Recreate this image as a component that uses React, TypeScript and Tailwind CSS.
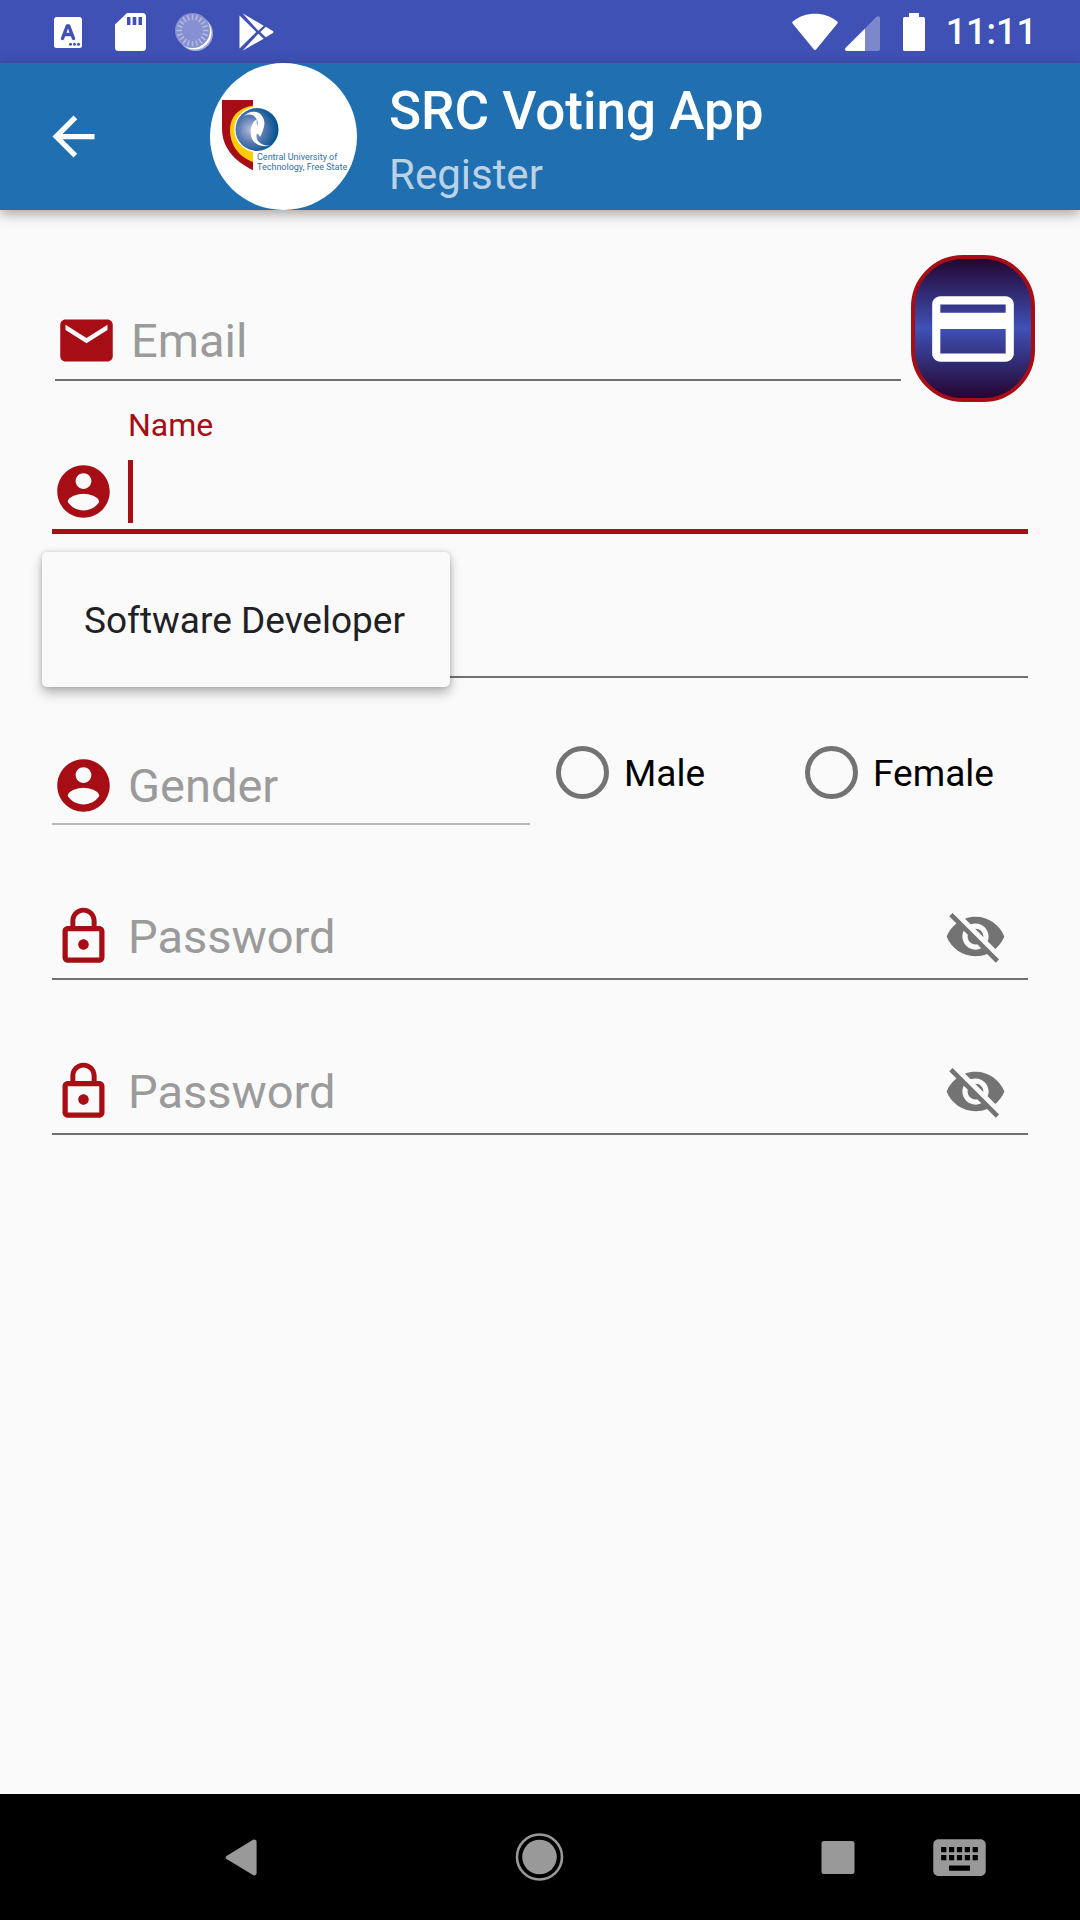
import { useState, type ReactNode } from "react";

const PATHS = {
  back: "M20 11H7.83l5.59-5.59L12 4l-8 8 8 8 1.41-1.41L7.83 13H20v-2z",
  mail: "M20 4H4c-1.1 0-1.99.9-1.99 2L2 18c0 1.1.9 2 2 2h16c1.1 0 2-.9 2-2V6c0-1.1-.9-2-2-2zm0 4l-8 5-8-5V6l8 5 8-5v2z",
  person:
    "M12 2C6.48 2 2 6.48 2 12s4.48 10 10 10 10-4.48 10-10S17.52 2 12 2zm0 3c1.66 0 3 1.34 3 3s-1.34 3-3 3-3-1.34-3-3 1.34-3 3-3zm0 14.2c-2.5 0-4.71-1.28-6-3.22.03-1.99 4-3.08 6-3.08 1.99 0 5.97 1.09 6 3.08-1.29 1.94-3.5 3.22-6 3.22z",
  lock: "M12 17c1.1 0 2-.9 2-2s-.9-2-2-2-2 .9-2 2 .9 2 2 2zm6-9h-1V6c0-2.76-2.24-5-5-5S7 3.24 7 6v2H6c-1.1 0-2 .9-2 2v10c0 1.1.9 2 2 2h12c1.1 0 2-.9 2-2V10c0-1.1-.9-2-2-2zM8.9 6c0-1.71 1.39-3.1 3.1-3.1s3.1 1.39 3.1 3.1v2H8.9V6zM18 20H6V10h12v10z",
  eyeOff:
    "M12 7c2.76 0 5 2.24 5 5 0 .65-.13 1.26-.36 1.83l2.92 2.92c1.51-1.26 2.7-2.89 3.43-4.75-1.73-4.39-6-7.5-11-7.5-1.4 0-2.74.25-3.98.7l2.16 2.16C10.74 7.13 11.35 7 12 7zM2 4.27l2.28 2.28.46.46C3.08 8.3 1.78 10.02 1 12c1.73 4.39 6 7.5 11 7.5 1.55 0 3.03-.3 4.38-.84l.42.42L19.73 22 21 20.73 3.27 3 2 4.27zM7.53 9.8l1.55 1.55c-.05.21-.08.43-.08.65 0 1.66 1.34 3 3 3 .22 0 .44-.03.65-.08l1.55 1.55c-.67.33-1.41.53-2.2.53-2.76 0-5-2.24-5-5 0-.79.2-1.53.53-2.2zm4.31-.78l3.15 3.15.02-.16c0-1.66-1.34-3-3-3l-.17.01z",
  card: "M20 4H4c-1.11 0-1.99.89-1.99 2L2 18c0 1.11.89 2 2 2h16c1.11 0 2-.89 2-2V6c0-1.11-.89-2-2-2zm0 14H4v-6h16v6zm0-10H4V6h16v2z",
  keyboard:
    "M20 5H4c-1.1 0-1.99.9-1.99 2L2 17c0 1.1.9 2 2 2h16c1.1 0 2-.9 2-2V7c0-1.1-.9-2-2-2zm-9 3h2v2h-2V8zm0 3h2v2h-2v-2zM8 8h2v2H8V8zm0 3h2v2H8v-2zm-1 2H5v-2h2v2zm0-3H5V8h2v2zm9 7H8v-2h8v2zm0-4h-2v-2h2v2zm0-3h-2V8h2v2zm3 3h-2v-2h2v2zm0-3h-2V8h2v2z",
};

function Icon({ name, className = "size-[63px]" }: { name: keyof typeof PATHS; className?: string }) {
  return (
    <svg viewBox="0 0 24 24" fill="currentColor" aria-hidden="true" className={`${className} shrink-0`}>
      <path d={PATHS[name]} />
    </svg>
  );
}

function StatusBar() {
  const ticks = Array.from({ length: 20 }, (_, i) => i * 18);
  return (
    <div className="flex h-[63px] items-center justify-between bg-[#3f51b5] pr-[43px] pl-9 text-white">
      <div className="flex">
        <div className="flex w-[63px] justify-center">
          <svg viewBox="0 0 28 38" className="h-[38px] w-[28px]" aria-hidden="true">
            <rect x="0" y="4" width="28" height="31" rx="2.5" fill="#fff" />
            <path d="M8.5 25.5 13.2 13h1.6l4.7 12.500M10.500 21.500h7" fill="none" stroke="#3f51b5" strokeWidth="3.4" strokeLinecap="round" strokeLinejoin="round" />
            <circle cx="16.500" cy="31.200" r="1.500" fill="#3f51b5" />
            <circle cx="20.500" cy="31.200" r="1.500" fill="#3f51b5" />
            <circle cx="24.500" cy="31.200" r="1.500" fill="#3f51b5" />
          </svg>
        </div>
        <div className="flex w-[63px] justify-center">
          <svg viewBox="0 0 31 38" className="h-[38px] w-[31px]" aria-hidden="true">
            <path d="M12 0h15.500A3.500 3.500 0 0 1 31 3.500v31a3.500 3.500 0 0 1-3.500 3.500h-24A3.500 3.500 0 0 1 0 34.500V11.500z" fill="#fff" />
            <path d="M12 4h3.400v8H12zM17.700 4h3.600v8h-3.600zM23.500 4h3.500v8h-3.500z" fill="#3f51b5" />
          </svg>
        </div>
        <div className="flex w-[63px] justify-center">
          <svg viewBox="0 0 38 38" className="size-[38px]" aria-hidden="true">
            <circle cx="20.500" cy="20.500" r="17.500" fill="#a3abdb" />
            <circle cx="19.500" cy="19.500" r="17" fill="#fff" />
            <circle cx="17.500" cy="17.500" r="17.500" fill="#8790d0" />
            {ticks.map((a) => (
              <path key={a} d="M17.500 1.500v5.500" transform={`rotate(${a} 17.500 17.500)`} stroke="#b4bae2" strokeWidth="1.500" />
            ))}
          </svg>
        </div>
        <div className="flex w-[63px] justify-center">
          <svg viewBox="0 0 35 38" className="h-[38px] w-[35px]" aria-hidden="true">
            <path d="M.5 2.500 17.200 19 .5 35.500zM3.500.3 24.700 12.800 19.300 17.800zM26.800 13.800 33.800 18a1.200 1.200 0 0 1 0 2L26.800 24.200 21.300 19zM19.300 20.700l5.400 5L3.500 37.800z" fill="#fff" />
          </svg>
        </div>
      </div>
      <div className="flex items-center">
        <svg viewBox="0 0 46 38" className="mr-[7px] h-[38px] w-[46px]" aria-hidden="true">
          <path d="M.7 8.500C13-2 33-2 45.300 8.500c.6.6.6 1.400.1 2L24.300 36.300c-.7.8-1.900.8-2.600 0L.6 10.500c-.5-.6-.5-1.400.1-2z" fill="#fff" />
        </svg>
        <svg viewBox="0 0 35 38" className="mr-[23px] h-[38px] w-[35px]" aria-hidden="true">
          <path d="M20 15.500 31.500 3.800c1.300-1.300 3.500-.6 3.500 1.200V36c0 1.200-.8 2-2 2H20z" fill="#7c87cc" />
          <path d="M20 15.500V38H2c-1.800 0-2.600-2-1.300-3.300z" fill="#fff" />
        </svg>
        <svg viewBox="0 0 22 38" className="mr-[21px] h-[38px] w-[22px]" aria-hidden="true">
          <path d="M6 0h10v4h4.500A1.500 1.500 0 0 1 22 5.500v31a1.500 1.500 0 0 1-1.500 1.500h-19A1.500 1.500 0 0 1 0 36.500v-31A1.500 1.500 0 0 1 1.500 4H6z" fill="#fff" />
        </svg>
        <time className="pt-0.5 text-[36px] leading-[43px] font-medium">11:11</time>
      </div>
    </div>
  );
}

function Logo() {
  return (
    <svg viewBox="0 0 147 147" className="size-[147px] shrink-0" role="img" aria-label="Central University of Technology, Free State">
      <defs>
        <radialGradient id="globe" cx="0.36" cy="0.5" r="0.62">
          <stop offset="0" stopColor="#b9c0de" />
          <stop offset="0.45" stopColor="#5f7fb4" />
          <stop offset="1" stopColor="#00508f" />
        </radialGradient>
      </defs>
      <circle cx="73.500" cy="73.500" r="73.500" fill="#fff" />
      <path d="M12 37h31v70.300C24 98 12 84 12 66z" fill="#a60d14" />
      <path d="M43 42.500C28 45 20 54 20 67c0 15 9 27 23 32z" fill="#ffcc05" />
      <circle cx="47" cy="66.500" r="22.800" fill="#fff" />
      <circle cx="47" cy="66.500" r="21.500" fill="url(#globe)" />
      <path d="M34 53c5-5 14-6 18 0 3 4 3 9 1 14-1 3-2 5-3 7-1-3-3-4-6-4 5-5 5-12 1-16-3-3-7-3-11-1z" fill="#fff" />
      <path d="M60 82c-7 3-15 0-18-6-2-5-2-11 1-16 1-2 3-3 4-4-1 4 0 7 3 9-4 4-5 10-1 14 3 3 7 4 11 3z" fill="#fff" />
      <g fill="#2f719f" fontFamily="Roboto, sans-serif" fontSize="9">
        <text x="47" y="97">Central University of</text>
        <text x="47" y="107">Technology, Free State</text>
      </g>
    </svg>
  );
}

function AppBar() {
  return (
    <header className="relative flex h-[147px] items-center bg-[#206fb1] pl-[42px] text-white shadow-[0_4px_12px_rgba(0,0,0,0.35)]">
      <button type="button" aria-label="Back" className="mr-[105px]">
        <Icon name="back" />
      </button>
      <Logo />
      <div className="flex flex-col gap-2 pt-1.5 pl-8">
        <h1 className="text-[53px] leading-[61px] font-medium">SRC Voting App</h1>
        <p className="text-[42px] leading-[49px] text-white/70">Register</p>
      </div>
    </header>
  );
}

const INPUT =
  "h-[63px] w-full min-w-0 flex-1 bg-transparent text-[47px] leading-[63px] outline-none placeholder:text-[#9b9b9b] placeholder:opacity-100";

function Field({ icon, line, children }: { icon: keyof typeof PATHS; line: string; children: ReactNode }) {
  return (
    <div className={`flex items-center ${line}`}>
      <span className="mr-[13px] text-[#a60d14]">
        <Icon name={icon} />
      </span>
      {children}
    </div>
  );
}

function PasswordField({ label }: { label: string }) {
  const [shown, setShown] = useState(false);
  return (
    <div className="mt-20">
      <Field icon="lock" line="border-b-2 border-[#707070] pb-[10px]">
        <input type={shown ? "text" : "password"} aria-label={label} placeholder="Password" className={INPUT} />
        <button type="button" aria-label="Show password" onClick={() => setShown(!shown)} className="mr-[21px] text-[#737373]">
          <Icon name="eyeOff" />
        </button>
      </Field>
    </div>
  );
}

function GenderOption({ label }: { label: string }) {
  return (
    <label className="flex h-[63px] items-center gap-[15px] pl-[26px] text-[37px] leading-[45px] text-black">
      <input
        type="radio"
        name="gender"
        value={label}
        className="size-[53px] shrink-0 appearance-none rounded-full border-[5px] border-[#737373] checked:bg-[#a60d14]"
      />
      <span className="pt-0.5">{label}</span>
    </label>
  );
}

function RegisterForm() {
  return (
    <form className="pt-[45px]">
      <div className="flex items-start gap-[10px] pr-[45px] pl-[55px]">
        <div className="flex-1 pt-[54px]">
          <Field icon="mail" line="border-b-2 border-[#707070] pb-[7px]">
            <input type="email" aria-label="Email" placeholder="Email" className={INPUT} />
          </Field>
        </div>
        <button
          type="button"
          aria-label="Scan card"
          className="flex h-[147px] w-[124px] items-center justify-center rounded-[52px] border-4 border-[#a60d14] bg-linear-to-b/srgb from-[#240531] via-[#3f51b5] to-[#240531] text-white"
        >
          <Icon name="card" className="size-[98px]" />
        </button>
      </div>

      <div className="px-[52px] pt-[5px]">
        <div className="relative">
          <label htmlFor="name" className="mb-[17px] block pl-[76px] text-[32px] leading-[36px] text-[#a60d14]">
            Name
          </label>
          <Field icon="person" line="border-b-[5px] border-[#a60d14] pb-[6px]">
            <span className="h-[63px] w-[5px] bg-[#a60d14]" />
            <input id="name" type="text" className={INPUT} />
          </Field>
          <button
            type="button"
            className="absolute top-full -left-[10px] z-10 mt-[18px] h-[135px] min-w-[408px] rounded-[5px] bg-[#fafafa] px-[42px] pt-0.5 text-left text-[37px] leading-[43px] whitespace-nowrap text-[#212125] shadow-[0_6px_12px_rgba(0,0,0,0.28),0_0_4px_rgba(0,0,0,0.16)]"
          >
            Software Developer
          </button>
        </div>

        <div className="mt-[73px]">
          <Field icon="person" line="border-b-2 border-[#707070] pb-[6px]">
            <input type="text" aria-label="Surname" className={INPUT} />
          </Field>
        </div>

        <div className="mt-[63px] grid grid-cols-[478fr_249fr_249fr]">
          <div className="pt-[13px]">
            <Field icon="person" line="border-b-2 border-[#b7b7b7] pb-[6px]">
              <input type="text" aria-label="Gender" placeholder="Gender" disabled className={INPUT} />
            </Field>
          </div>
          <GenderOption label="Male" />
          <GenderOption label="Female" />
        </div>

        <PasswordField label="Password" />
        <PasswordField label="Confirm password" />
      </div>
    </form>
  );
}

function NavBar() {
  return (
    <nav className="flex h-[126px] items-center gap-[59px] bg-black pr-[89px] pl-[210px] text-[#999]">
      <div className="flex flex-1 justify-between">
        <button type="button" aria-label="Back">
          <svg viewBox="0 0 63 63" className="size-[63px]" fill="currentColor" aria-hidden="true">
            <path d="M16.500 30 43 13.800c1.600-1 3.600 0 3.600 2V47c0 2-2 3-3.600 2L16.500 33c-1.200-.8-1.200-2.200 0-3z" />
          </svg>
        </button>
        <button type="button" aria-label="Home">
          <svg viewBox="0 0 63 63" className="size-[63px]" aria-hidden="true">
            <circle cx="31.500" cy="31" r="22.500" fill="none" stroke="currentColor" strokeWidth="2.600" />
            <circle cx="31.500" cy="31" r="17.300" fill="currentColor" />
          </svg>
        </button>
        <button type="button" aria-label="Recent apps">
          <svg viewBox="0 0 63 63" className="size-[63px]" fill="currentColor" aria-hidden="true">
            <rect x="15.500" y="15" width="33" height="33" rx="2.500" />
          </svg>
        </button>
      </div>
      <button type="button" aria-label="Keyboard">
        <Icon name="keyboard" />
      </button>
    </nav>
  );
}

export default function App() {
  return (
    <div className="flex min-h-screen flex-col bg-[#fafafa] font-['Roboto',sans-serif]">
      <StatusBar />
      <AppBar />
      <main className="flex-1">
        <RegisterForm />
      </main>
      <NavBar />
    </div>
  );
}
